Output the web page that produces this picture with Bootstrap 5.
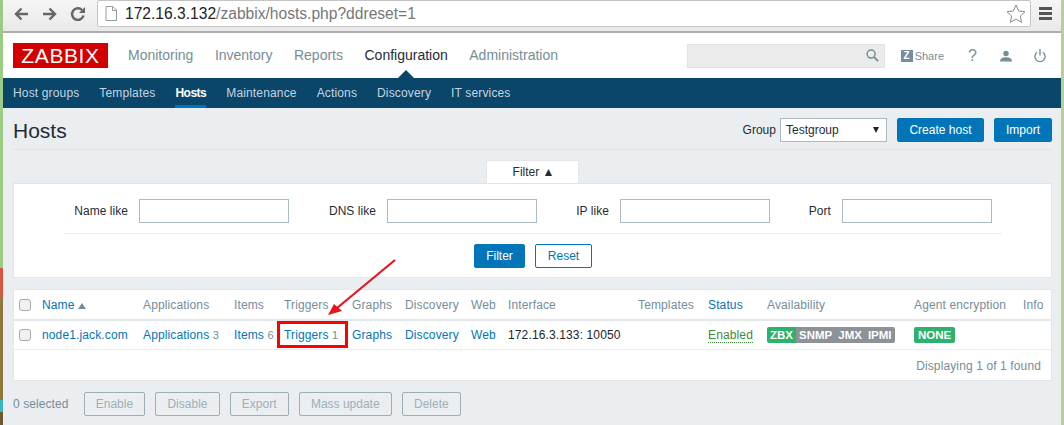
<!DOCTYPE html>
<html lang="en">
<head>
    <meta charset="UTF-8">
    <meta name="viewport" content="width=device-width, initial-scale=1.0">
    <title>Configuration of hosts</title>
    <link href="https://cdn.jsdelivr.net/npm/bootstrap@5.3.0/dist/css/bootstrap.min.css" rel="stylesheet">
    <style>
        html, body { height: 425px; overflow: hidden; }
        body {
            font-family: "Liberation Sans", Arial, sans-serif;
            font-size: 12px;
            line-height: 14px;
            color: #1f2c33;
            background: linear-gradient(#9ccb86 0 63%, #d8553f 63% 70%, #8f7a3c 70% 94%, #38b4c4 94% 97%, #6d5a30 97%) left / 3px 100% no-repeat, #b9cf96;
        }
        .app-window { margin: 0 3px; height: 425px; background: #ebeef0; position: relative; }

        .browser-bar { height: 33px; background: linear-gradient(#f6f6f6, #e9e9e9); border-bottom: 2px solid #aeaeae; padding: 0 9px 4px 10px; }
        .browser-btn { width: 29px; height: 16px; }
        .address-box { width: 934px; height: 27px; background: #fff; border: 1px solid #c4c4c4; border-radius: 2px; margin-left: -2px; padding: 0 4px 0 7px; font-size: 15.6px; color: #777; }
        .address-box b { font-weight: 400; color: #222; }
        .menu-btn { margin-left: 8px; height: 13px; }

        .top-header { height: 45px; background: #fff; padding: 0 15px 0 10px; }
        .zbx-logo { width: 95px; height: 25px; background: #d40000; color: #fff; font-size: 21px; line-height: 25px; text-align: center; letter-spacing: .6px; }
        .main-links { gap: 21.5px; margin: 0 0 2px 20px; font-size: 14px; }
        .main-links a { color: #768d99; text-decoration: none; }
        .main-links a.is-current { color: #1f2c33; position: relative; display: block; }
        .main-links a.is-current::after { content: ""; position: absolute; left: 50%; margin-left: -8px; bottom: -16px; border: 8px solid transparent; border-top: 0; border-bottom-color: #0a466a; }
        .search-box { width: 198px; height: 24px; background: #ebebeb; border: 1px solid #e2e2e2; padding-right: 5px; margin-right: 16px; }
        .share-link { color: #768d99; margin-right: 24px; font-size: 11px; }
        .z-mark { width: 12px; height: 12px; background: #768d99; color: #fff; font-size: 10px; line-height: 12px; font-weight: 700; text-align: center; margin-right: 2px; }
        .help-mark { color: #768d99; font-size: 16px; width: 8px; margin-right: 24px; }
        .user-icon { margin-right: 22px; }

        .sub-nav { height: 30px; background: #0a466a; padding: 0 10px; gap: 20px; }
        .sub-nav a { color: #c5d5e0; text-decoration: none; line-height: 30px; height: 30px; letter-spacing: .15px; }
        .sub-nav a.is-current { color: #fff; border-bottom: 3px solid #0275b8; font-weight: 700; letter-spacing: -.5px; }

        .page-head { height: 42px; margin: 0 9px 0 10px; border-bottom: 1px solid #dfe4e7; padding-top: 10px; align-items: flex-start; }
        .page-head h1 { font-size: 21px; line-height: 26px; font-weight: 400; margin: 0; color: #1f2c33; }
        .field-input { height: 24px; border: 1px solid #acbbc2; background: #fff; border-radius: 0; }
        .group-select { width: 107px; padding: 0 5px; margin: 0 10px 0 4px; position: relative; font-size: 12px; line-height: 22px; }
        .group-select::after { content: ""; position: absolute; right: 7px; top: 8px; border: 3.5px solid transparent; border-top: 6px solid #222; border-bottom: 0; }
        .zbx-btn { height: 24px; padding: 0 11.5px; background: #0275b8; border: 1px solid #0275b8; color: #fff; border-radius: 2px; font-size: 12px; line-height: 22px; }
        .zbx-btn:hover { background: #0275b8; color: #fff; }
        .zbx-outline { background: #fff; color: #0275b8; }
        .zbx-outline:hover { background: #fff; color: #0275b8; }
        .import-btn { width: 58px; padding: 0; margin-left: 10px; }

        .filter-tabbar { margin: 10px 0 0; height: 23px; padding-left: 483px; }
        .filter-tab { width: 93px; height: 23px; background: #fff; border: 1px solid #e3e7ea; border-bottom: 0; text-align: center; line-height: 23px; color: #1f2c33; padding-left: 2px; }
        .filter-panel { margin: 0 9px 0 10px; height: 95px; background: #fff; border: 1px solid #e3e7ea; border-top-color: #dfe4e7; padding: 15px 49px 0 50px; }
        .filter-row { border-bottom: 1px solid #ebeef0; height: 35px; width: 938px; }
        .filter-row label { text-align: right; margin-right: 11px; line-height: 24px; color: #1f2c33; letter-spacing: .05px; }
        .filter-row .field-input { width: 150px; }
        .label-name { width: 64px; }
        .label-dns { width: 87px; }
        .label-ip { width: 72px; }
        .label-port { width: 61px; }
        .filter-actions { gap: 10px; padding-top: 10px; width: 938px; justify-content: center; }
        .filter-actions .zbx-btn { width: 51px; padding: 0; }
        .filter-actions .zbx-outline { width: 57px; }

        .hosts-panel { margin: 11px 9px 0 10px; height: 92px; background: #fff; border: 1px solid #e3e7ea; }
        .hosts-table { table-layout: fixed; width: 1037px; margin: 0; }
        .hosts-table th, .hosts-table td { padding: 0; font-size: 12px; font-weight: 400; line-height: 14px; letter-spacing: .13px; vertical-align: middle; white-space: nowrap; border: 0; box-shadow: none; background: transparent; }
        .hosts-table thead tr { height: 30px; }
        .hosts-table thead th { color: #768d99; border-bottom: 2px solid #e3e7ea; }
        .hosts-table tbody tr { height: 29px; }
        .hosts-table tbody td { border-bottom: 1px solid #ebeef0; }
        .hosts-table a { color: #0275b8; text-decoration: none; }
        .hosts-table .link-count { color: #768d99; font-size: 11px; }
        .sort-mark { display: inline-block; border: 4px solid transparent; border-top: 0; border-bottom: 6px solid #768d99; margin-left: 3px; }
        .fake-check { display: block; width: 12px; height: 12px; margin-left: 5px; background: #f0f0f0; border: 1px solid #a9a9a9; border-radius: 3px; }
        .status-on { color: #3a8b3a; border-bottom: 1px dotted #3a8b3a; }
        .avail-tag { display: inline-block; height: 16px; line-height: 16px; padding: 0 3px; color: #fff; font-weight: 700; background: #8b9298; font-size: 11.5px; letter-spacing: 0; }
        .avail-tag.is-ok { background: #2db16c; }
        .avail-tag:first-child { border-radius: 2px 0 0 2px; }
        .avail-tag:last-child { border-radius: 0 2px 2px 0; }
        .hosts-table td > .enc-tag { border-radius: 2px; padding: 0 4px; }
        .paging-note { text-align: right; color: #768d99; padding: 9px 10px 0 0; letter-spacing: .12px; }

        .action-bar { margin: 11px 0 0 10px; gap: 10px; color: #768d99; align-items: center; letter-spacing: .08px; }
        .action-bar span { margin-right: 5px; }
        .ghost-btn { height: 24px; padding: 0 11.2px; background: transparent; border: 1px solid #cfd7da; border-radius: 2px; color: #aebbc1; font-size: 12px; line-height: 22px; letter-spacing: 0; }

        .note-overlay { position: absolute; left: -3px; top: 0; pointer-events: none; }
    </style>
</head>
<body>
    <div class="app-window">
        <!-- browser chrome -->
        <div class="browser-bar d-flex align-items-center">
            <div class="browser-btn">
                <svg width="16" height="16" viewBox="0 0 16 16" fill="none" stroke="#666" stroke-width="2.4"><path d="M15 8H3M8.5 2.5 3 8l5.5 5.5"/></svg>
            </div>
            <div class="browser-btn">
                <svg width="16" height="16" viewBox="0 0 16 16" fill="none" stroke="#666" stroke-width="2.4"><path d="M1 8h12M7.500 2.500 13 8l-5.500 5.500"/></svg>
            </div>
            <div class="browser-btn">
                <svg width="16" height="16" viewBox="0 0 16 16" fill="none" stroke="#666" stroke-width="2.400"><path d="M13.500 9.500A5.800 5.800 0 1 1 12 4"/><path d="M15 1v6H9z" fill="#666" stroke="none"/></svg>
            </div>
            <div class="address-box d-flex align-items-center flex-shrink-0">
                <svg class="me-2" width="12" height="15" viewBox="0 0 12 15" fill="#fff" stroke="#999"><path d="M1 .5h7l3.500 3.500v10.500H1z"/><path d="M7.500 .5V4.500h4" fill="none"/></svg>
                <span><b>172.16.3.132</b>/zabbix/hosts.php?ddreset=1</span>
                <svg class="ms-auto" width="20" height="19" viewBox="0 0 20 19" fill="#fff" stroke="#8a8a8a"><path d="M10 1l2.700 6 6.300.7-4.700 4.300 1.300 6.300L10 15l-5.600 3.300L5.700 12 1 7.700 7.300 7z"/></svg>
            </div>
            <div class="menu-btn">
                <svg class="d-block" width="13" height="13" viewBox="0 0 13 13" fill="#555"><rect width="13" height="3" y="0"/><rect width="13" height="3" y="5"/><rect width="13" height="3" y="10"/></svg>
            </div>
        </div>

        <!-- zabbix header -->
        <div class="top-header d-flex align-items-center">
            <div class="zbx-logo">ZABBIX</div>
            <nav class="main-links d-flex">
                <a href="#">Monitoring</a>
                <a href="#">Inventory</a>
                <a href="#">Reports</a>
                <a href="#" class="is-current">Configuration</a>
                <a href="#">Administration</a>
            </nav>
            <div class="search-box ms-auto d-flex align-items-center justify-content-end">
                <svg width="13" height="13" viewBox="0 0 14 14" fill="none" stroke="#768d99" stroke-width="1.600"><circle cx="5.500" cy="5.500" r="4.300"/><path d="M8.700 8.700 13 13" stroke-width="2"/></svg>
            </div>
            <div class="share-link d-flex align-items-center"><span class="z-mark">Z</span>Share</div>
            <div class="help-mark">?</div>
            <svg class="user-icon" width="12" height="12" viewBox="0 0 14 13" fill="#768d99"><circle cx="7" cy="3.500" r="3.200"/><path d="M0 13c0-3.500 3-5 7-5s7 1.500 7 5z"/></svg>
            <svg width="12" height="13" viewBox="0 0 13 14" fill="none" stroke="#768d99" stroke-width="1.500"><path d="M3.500 3.500a5.500 5.500 0 1 0 6 0M6.500 0v7"/></svg>
        </div>
        <nav class="sub-nav d-flex">
            <a href="#">Host groups</a>
            <a href="#">Templates</a>
            <a href="#" class="is-current">Hosts</a>
            <a href="#">Maintenance</a>
            <a href="#">Actions</a>
            <a href="#">Discovery</a>
            <a href="#">IT services</a>
        </nav>

        <!-- page title -->
        <div class="page-head d-flex">
            <h1>Hosts</h1>
            <div class="ms-auto d-flex align-items-center">
                <span>Group</span>
                <div class="field-input group-select">Testgroup</div>
                <button class="btn zbx-btn">Create host</button>
                <button class="btn zbx-btn import-btn">Import</button>
            </div>
        </div>

        <!-- filter -->
        <div class="filter-tabbar">
            <div class="filter-tab">Filter &#9650;</div>
        </div>
        <div class="filter-panel">
            <div class="filter-row d-flex">
                <label class="label-name">Name like</label><div class="field-input"></div>
                <label class="label-dns">DNS like</label><div class="field-input"></div>
                <label class="label-ip">IP like</label><div class="field-input"></div>
                <label class="label-port">Port</label><div class="field-input"></div>
            </div>
            <div class="filter-actions d-flex">
                <button class="btn zbx-btn">Filter</button>
                <button class="btn zbx-btn zbx-outline">Reset</button>
            </div>
        </div>

        <!-- hosts table -->
        <div class="hosts-panel">
            <table class="table hosts-table">
                <colgroup>
                    <col style="width: 28px"><col style="width: 101px"><col style="width: 91px"><col style="width: 50px">
                    <col style="width: 68px"><col style="width: 53px"><col style="width: 66px"><col style="width: 37px">
                    <col style="width: 130px"><col style="width: 70px"><col style="width: 59px"><col style="width: 147px">
                    <col style="width: 109px"><col>
                </colgroup>
                <thead>
                    <tr>
                        <th><span class="fake-check"></span></th>
                        <th><a href="#">Name</a><span class="sort-mark"></span></th>
                        <th>Applications</th>
                        <th>Items</th>
                        <th>Triggers</th>
                        <th>Graphs</th>
                        <th>Discovery</th>
                        <th>Web</th>
                        <th>Interface</th>
                        <th>Templates</th>
                        <th><a href="#">Status</a></th>
                        <th>Availability</th>
                        <th>Agent encryption</th>
                        <th>Info</th>
                    </tr>
                </thead>
                <tbody>
                    <tr>
                        <td><span class="fake-check"></span></td>
                        <td><a href="#">node1.jack.com</a></td>
                        <td><a href="#">Applications</a> <span class="link-count">3</span></td>
                        <td><a href="#">Items</a> <span class="link-count">6</span></td>
                        <td><a href="#">Triggers</a> <span class="link-count">1</span></td>
                        <td><a href="#">Graphs</a></td>
                        <td><a href="#">Discovery</a></td>
                        <td><a href="#">Web</a></td>
                        <td>172.16.3.133: 10050</td>
                        <td></td>
                        <td><span class="status-on">Enabled</span></td>
                        <td><span class="d-inline-flex"><span class="avail-tag is-ok">ZBX</span><span class="avail-tag">SNMP</span><span class="avail-tag">JMX</span><span class="avail-tag">IPMI</span></span></td>
                        <td><span class="avail-tag is-ok enc-tag">NONE</span></td>
                        <td></td>
                    </tr>
                </tbody>
            </table>
            <div class="paging-note">Displaying 1 of 1 found</div>
        </div>

        <div class="action-bar d-flex">
            <span>0 selected</span>
            <button class="btn ghost-btn" disabled>Enable</button>
            <button class="btn ghost-btn" disabled>Disable</button>
            <button class="btn ghost-btn" disabled>Export</button>
            <button class="btn ghost-btn" disabled>Mass update</button>
            <button class="btn ghost-btn" disabled>Delete</button>
        </div>

        <!-- red annotation drawn over the page -->
        <svg class="note-overlay" width="1064" height="425" viewBox="0 0 1064 425" fill="none">
            <rect x="278.500" y="322.500" width="68" height="24" stroke="#f00" stroke-width="3"/>
            <path d="M395 260 337 308" stroke="#e8141c" stroke-width="2.200"/>
            <path d="M328 315 334 304 342 311z" fill="#e8141c"/>
        </svg>
    </div>
    <script src="https://cdn.jsdelivr.net/npm/bootstrap@5.3.0/dist/js/bootstrap.bundle.min.js"></script>
</body>
</html>
